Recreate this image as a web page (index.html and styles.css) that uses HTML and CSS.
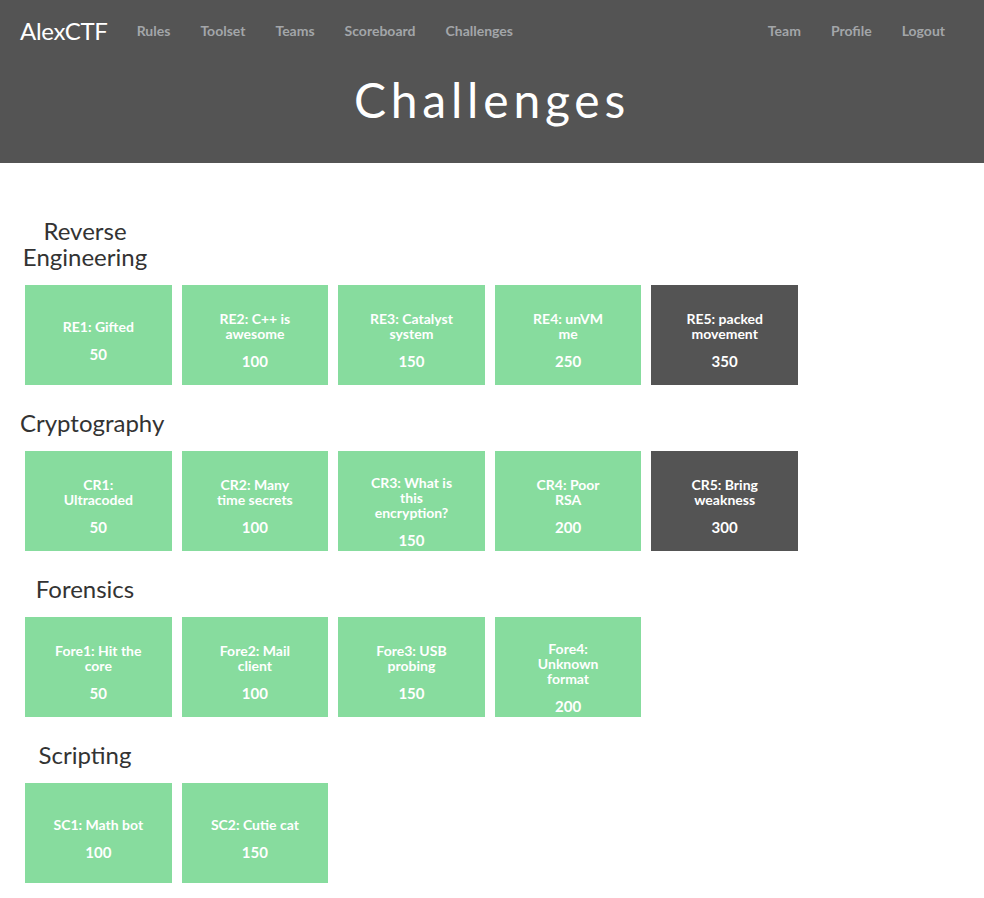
FILE: index.html
```html
<!DOCTYPE html>
<html>
<head>
<meta charset="utf-8">
<title>AlexCTF - Challenges</title>
<link rel="stylesheet" href="styles.css">
</head>
<body>
<header class="hero">
  <nav class="nav">
    <a class="brand" href="#">AlexCTF</a>
    <ul class="links">
      <li><a href="#">Rules</a></li>
      <li><a href="#">Toolset</a></li>
      <li><a href="#">Teams</a></li>
      <li><a href="#">Scoreboard</a></li>
      <li><a href="#">Challenges</a></li>
    </ul>
    <ul class="links right">
      <li><a href="#">Team</a></li>
      <li><a href="#">Profile</a></li>
      <li><a href="#">Logout</a></li>
    </ul>
  </nav>
  <h1 class="title">Challenges</h1>
</header>

<main class="board">
  <section class="category">
    <h2 class="cat-name">Reverse Engineering</h2>
    <div class="grid">
      <div class="chal"><div class="inner"><div class="name">RE1: Gifted</div><div class="pts">50</div></div></div>
      <div class="chal"><div class="inner"><div class="name">RE2: C++ is awesome</div><div class="pts">100</div></div></div>
      <div class="chal"><div class="inner"><div class="name">RE3: Catalyst system</div><div class="pts">150</div></div></div>
      <div class="chal"><div class="inner"><div class="name">RE4: unVM me</div><div class="pts">250</div></div></div>
      <div class="chal locked"><div class="inner"><div class="name">RE5: packed movement</div><div class="pts">350</div></div></div>
    </div>
  </section>

  <section class="category">
    <h2 class="cat-name">Cryptography</h2>
    <div class="grid">
      <div class="chal"><div class="inner"><div class="name">CR1: Ultracoded</div><div class="pts">50</div></div></div>
      <div class="chal"><div class="inner"><div class="name">CR2: Many time secrets</div><div class="pts">100</div></div></div>
      <div class="chal"><div class="inner"><div class="name">CR3: What is this encryption?</div><div class="pts">150</div></div></div>
      <div class="chal"><div class="inner"><div class="name">CR4: Poor RSA</div><div class="pts">200</div></div></div>
      <div class="chal locked"><div class="inner"><div class="name">CR5: Bring weakness</div><div class="pts">300</div></div></div>
    </div>
  </section>

  <section class="category">
    <h2 class="cat-name">Forensics</h2>
    <div class="grid">
      <div class="chal"><div class="inner"><div class="name">Fore1: Hit the core</div><div class="pts">50</div></div></div>
      <div class="chal"><div class="inner"><div class="name">Fore2: Mail client</div><div class="pts">100</div></div></div>
      <div class="chal"><div class="inner"><div class="name">Fore3: USB probing</div><div class="pts">150</div></div></div>
      <div class="chal"><div class="inner"><div class="name">Fore4: Unknown format</div><div class="pts">200</div></div></div>
    </div>
  </section>

  <section class="category">
    <h2 class="cat-name">Scripting</h2>
    <div class="grid">
      <div class="chal"><div class="inner"><div class="name">SC1: Math bot</div><div class="pts">100</div></div></div>
      <div class="chal"><div class="inner"><div class="name">SC2: Cutie cat</div><div class="pts">150</div></div></div>
    </div>
  </section>
</main>
</body>
</html>
```

FILE: styles.css
```css
html, body {
  margin: 0;
  padding: 0;
  background: #ffffff;
  font-family: "Lato", "Liberation Sans", sans-serif;
}

.hero {
  background: #545454;
  height: 163px;
  box-sizing: border-box;
}

.nav {
  display: flex;
  align-items: center;
  height: 60px;
  padding: 0 24px 0 20px;
}

.brand {
  color: #ffffff;
  text-decoration: none;
  font-size: 24px;
  font-weight: 400;
  letter-spacing: -0.3px;
  margin-right: 14px;
}

.links {
  display: flex;
  list-style: none;
  margin: 0;
  padding: 0;
}

.links li a {
  display: block;
  padding: 0 15px;
  color: #a3a6a9;
  text-decoration: none;
  font-size: 14px;
  font-weight: 700;
}

.links.right {
  margin-left: auto;
}

.title {
  margin: 10px 0 0;
  text-align: center;
  color: #ffffff;
  font-family: "Lato", sans-serif;
  font-weight: 400;
  font-size: 48px;
  letter-spacing: 4.8px;
  line-height: 60px;
}

.board {
  padding: 55px 0 20px 20px;
}

.category {
  margin-bottom: 25px;
}

.cat-name {
  width: 130px;
  margin: 0 0 15px;
  text-align: center;
  color: #333333;
  font-size: 24px;
  font-weight: 400;
  line-height: 26px;
  white-space: normal;
}

.grid {
  display: grid;
  grid-template-columns: repeat(5, 146.6px);
  gap: 10px;
  padding-left: 5px;
}

.chal {
  height: 100px;
  box-sizing: border-box;
  padding: 24px 28px 13px;
  background: #87dc9e;
  color: #ffffff;
  display: flex;
  flex-direction: column;
  text-align: center;
}

.chal.locked {
  background: #545454;
}

.inner {
  margin: auto 0;
}

.name {
  font-size: 14px;
  font-weight: 700;
  line-height: 15px;
}

.pts {
  margin-top: 11px;
  font-size: 15px;
  font-weight: 700;
  line-height: 18px;
}
```
